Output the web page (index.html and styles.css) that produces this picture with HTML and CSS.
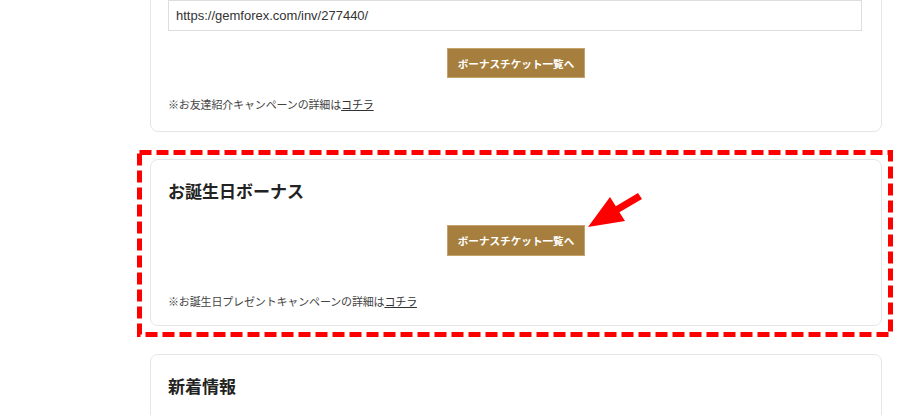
FILE: index.html
```html
<!DOCTYPE html>
<html lang="ja">
<head>
    <meta charset="UTF-8">
    <meta name="viewport" content="width=device-width, initial-scale=1.0">
    <title>ボーナス</title>
    <link rel="stylesheet" href="styles.css">
</head>
<body>
    <div class="main">
        <div class="card card-invite">
            <div class="urlbox">https://gemforex.com/inv/277440/</div>
            <div class="btnrow"><a class="btn" href="#">ボーナスチケット一覧へ</a></div>
            <p class="note">※お友達紹介キャンペーンの詳細は<a href="#">コチラ</a></p>
        </div>

        <div class="marked">
            <div class="card card-birthday">
                <h2 class="title">お誕生日ボーナス</h2>
                <div class="btnrow"><a class="btn" href="#">ボーナスチケット一覧へ</a></div>
                <p class="note">※お誕生日プレゼントキャンペーンの詳細は<a href="#">コチラ</a></p>
            </div>
            <svg class="mark" width="756" height="187" viewBox="0 0 756 187">
                <rect x="2.5" y="2.5" width="751" height="182" fill="none" stroke="#ff0000" stroke-width="5" stroke-dasharray="12 5"/>
                <polygon points="501,43 478.8,56.3 473,47 451,77 488,71 482.4,62.3 505,49" fill="#ff0000"/>
            </svg>
        </div>

        <div class="card card-news">
            <h2 class="title">新着情報</h2>
        </div>
    </div>
</body>
</html>
```

FILE: styles.css
```css
*{
    padding: 0;
    margin: 0;
    box-sizing: border-box;
}
body{
    background: #fff;
    font-family: "Liberation Sans", "Noto Sans CJK JP", sans-serif;
    color: #333;
    overflow: hidden;
}
.main{
    width: 732px;
    margin-left: 150px;
    margin-top: -21px;
}
.card{
    border: 1px solid #e6e6e6;
    border-radius: 8px;
    background: #fff;
    padding: 20px 17px 18px;
}
.urlbox{
    height: 31px;
    border: 1px solid #dedede;
    padding: 0 7px;
    line-height: 29px;
    font-size: 13px;
    color: #333;
    width: 694px;
}
.btnrow{
    display: flex;
    justify-content: center;
}
.btn{
    display: block;
    height: 30px;
    line-height: 30px;
    padding: 0 10px;
    background-color: #a67f3f;
    border: 1px solid #c4a46b;
    color: #fff;
    font-size: 10.6px;
    font-weight: bold;
    text-decoration: none;
}
.card-invite .btnrow{
    margin-top: 17px;
}
.note{
    font-size: 11px;
    line-height: 16px;
    letter-spacing: -0.15px;
    color: #444;
}
.note a{
    color: #333;
    text-decoration: underline;
}
.card-invite .note{
    margin-top: 19px;
}
.marked{
    position: relative;
    margin-top: 27px;
}
.mark{
    position: absolute;
    left: -13px;
    top: -9px;
    pointer-events: none;
}
.title{
    font-size: 17px;
    line-height: 26px;
    font-weight: bold;
    color: #222;
}
.card-birthday{
    padding-bottom: 15px;
}
.card-birthday .btnrow{
    margin-top: 19px;
}
.card-birthday .btn{
    height: 31px;
    line-height: 31px;
}
.card-birthday .note{
    margin-top: 38px;
}
.card-news{
    margin-top: 28px;
    height: 120px;
}
```
